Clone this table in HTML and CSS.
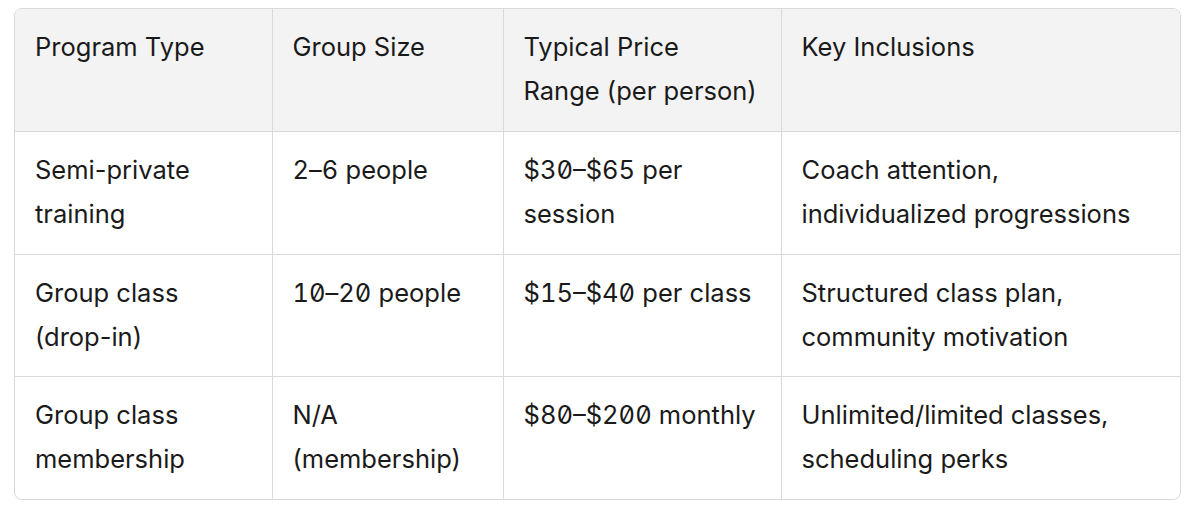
FILE: index.html
```html
<!DOCTYPE html>
<html lang="en">
<head>
<meta charset="utf-8">
<link rel="stylesheet" href="styles.css">
</head>
<body>
<div class="table-wrap">
  <table class="pricing">
    <colgroup>
      <col class="c1"><col class="c2"><col class="c3"><col class="c4">
    </colgroup>
    <thead>
      <tr>
        <th>Program Type</th>
        <th>Group Size</th>
        <th>Typical Price Range (per person)</th>
        <th>Key Inclusions</th>
      </tr>
    </thead>
    <tbody>
      <tr>
        <td>Semi-private training</td>
        <td><span class="num">2</span>–<span class="num">6</span> people</td>
        <td>$<span class="num">30</span>–$<span class="num">65</span> per session</td>
        <td>Coach attention, individualized progressions</td>
      </tr>
      <tr>
        <td>Group class (drop-in)</td>
        <td><span class="num">10</span>–<span class="num">20</span> people</td>
        <td>$<span class="num">15</span>–$<span class="num">40</span> per class</td>
        <td>Structured class plan, community motivation</td>
      </tr>
      <tr>
        <td>Group class membership</td>
        <td>N/A (membership)</td>
        <td>$<span class="num">80</span>–$<span class="num">200</span> monthly</td>
        <td>Unlimited/limited classes, scheduling perks</td>
      </tr>
    </tbody>
  </table>
</div>
</body>
</html>
```
FILE: styles.css
```css
html, body {
  margin: 0;
  padding: 0;
  background: #ffffff;
}
body {
  padding: 8px 13px 0 14px;
  font-family: Inter, "Noto Sans", sans-serif;
  color: #1a1a1a;
}
.table-wrap {
  border: 1px solid #d9d9d9;
  border-radius: 8px;
  overflow: hidden;
}
.pricing {
  width: 100%;
  border-collapse: collapse;
  table-layout: fixed;
  font-size: 25.5px;
  line-height: 44px;
}
.num {
  font-variant-numeric: tabular-nums slashed-zero;
}
.c1 { width: 257px; }
.c2 { width: 231px; }
.c3 { width: 278px; }
.c4 { width: auto; }
.pricing th,
.pricing td {
  text-align: left;
  vertical-align: top;
  font-weight: 400;
  padding: 16px 20px 17.75px 20px;
  border-left: 1px solid #d9d9d9;
  border-top: 1px solid #d9d9d9;
}
.pricing th:first-child,
.pricing td:first-child {
  border-left: none;
}
.pricing thead th {
  border-top: none;
  background: #f3f3f3;
}
```
